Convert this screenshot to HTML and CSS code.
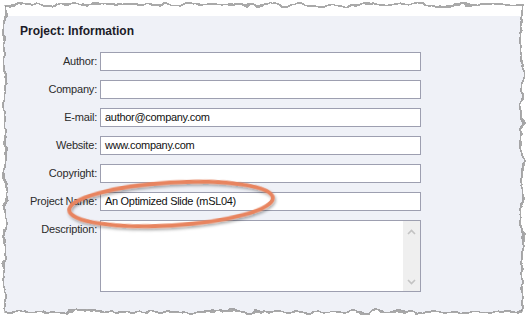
FILE: index.html
```html
<!DOCTYPE html>
<html lang="en">
<head>
  <meta charset="UTF-8" />
  <title>Project: Information</title>
  <link rel="stylesheet" href="styles.css">
</head>
<body>

  <div class="shot">
    <div class="panel">
      <h2 class="title">Project: Information</h2>

      <div class="form">
        <label class="label">Author:</label>
        <div class="field"></div>

        <label class="label">Company:</label>
        <div class="field"></div>

        <label class="label">E-mail:</label>
        <div class="field">author@company.com</div>

        <label class="label">Website:</label>
        <div class="field">www.company.com</div>

        <label class="label">Copyright:</label>
        <div class="field"></div>

        <label class="label">Project Name:</label>
        <div class="field">An Optimized Slide (mSL04)</div>

        <label class="label">Description:</label>
        <div class="field memo">
          <div class="memo-text"></div>
          <div class="scroll">
            <svg width="9" height="6" viewBox="0 0 9 6"><path d="M1 5 L4.5 1.5 L8 5" fill="none" stroke="#c3c3c3" stroke-width="1.6"/></svg>
            <svg width="9" height="6" viewBox="0 0 9 6"><path d="M1 1 L4.5 4.5 L8 1" fill="none" stroke="#c3c3c3" stroke-width="1.6"/></svg>
          </div>
        </div>
      </div>
    </div>

    <!-- highlight ring over the project name -->
    <svg class="ring" width="528" height="321">
      <defs>
        <filter id="shade" x="-20%" y="-50%" width="140%" height="200%">
          <feDropShadow dx="1" dy="2" stdDeviation="1.6" flood-color="#000" flood-opacity="0.35"/>
        </filter>
      </defs>
      <ellipse cx="171" cy="204" rx="102" ry="21.5" transform="rotate(-3.5 171 204)"
               fill="none" stroke="#e8845f" stroke-width="3.8" filter="url(#shade)"/>
    </svg>

    <!-- torn paper edge -->
    <svg class="frame" width="528" height="321">
      <defs>
        <filter id="torn" filterUnits="userSpaceOnUse" x="-20" y="-20" width="568" height="361">
          <feTurbulence type="fractalNoise" baseFrequency="0.07" numOctaves="3" seed="7"/>
          <feDisplacementMap in="SourceGraphic" scale="9" xChannelSelector="R" yChannelSelector="G"/>
        </filter>
      </defs>
      <g filter="url(#torn)">
        <path fill="#fff" fill-rule="evenodd" d="M-30 -30H560V350H-30Z M5 5H522V312H5Z"/>
        <rect x="5" y="5" width="517" height="307" fill="none" stroke="#7c7c7c" stroke-width="1.3"/>
      </g>
    </svg>
  </div>

</body>
</html>
```

FILE: styles.css
```css
body { margin: 0; background: #fff; font-family: "Liberation Sans", Arial, sans-serif; font-size: 11px; color: #1b1b1b; }
.shot { position: relative; width: 528px; height: 321px; overflow: hidden; }
.panel { margin-top: 16px; height: 305px; background: #eff1f7; padding-top: 9px; box-sizing: border-box; }
.title { margin: 0 0 14px 20px; font-size: 12px; line-height: 13px; font-weight: bold; color: #1b1b28; }
.form { display: grid; grid-template-columns: 97px 321px; grid-auto-rows: 19px; column-gap: 3px; row-gap: 9px; }
.label { text-align: right; line-height: 19px; color: #2b2b2b; white-space: nowrap; letter-spacing: -0.2px; }
.field { background: #fff; border: 1px solid #9d9fb0; box-sizing: border-box; height: 19px; line-height: 17px; padding-left: 4px; letter-spacing: -0.3px; color: #111; }
.memo { height: 72px; display: flex; padding: 0; }
.memo-text { flex: 1; }
.scroll { width: 17px; background: #efefef; display: flex; flex-direction: column; justify-content: space-between; align-items: center; padding: 8px 0 6px; }
.scroll svg { display: block; }
.ring, .frame { position: absolute; left: 0; top: 0; pointer-events: none; }
```
